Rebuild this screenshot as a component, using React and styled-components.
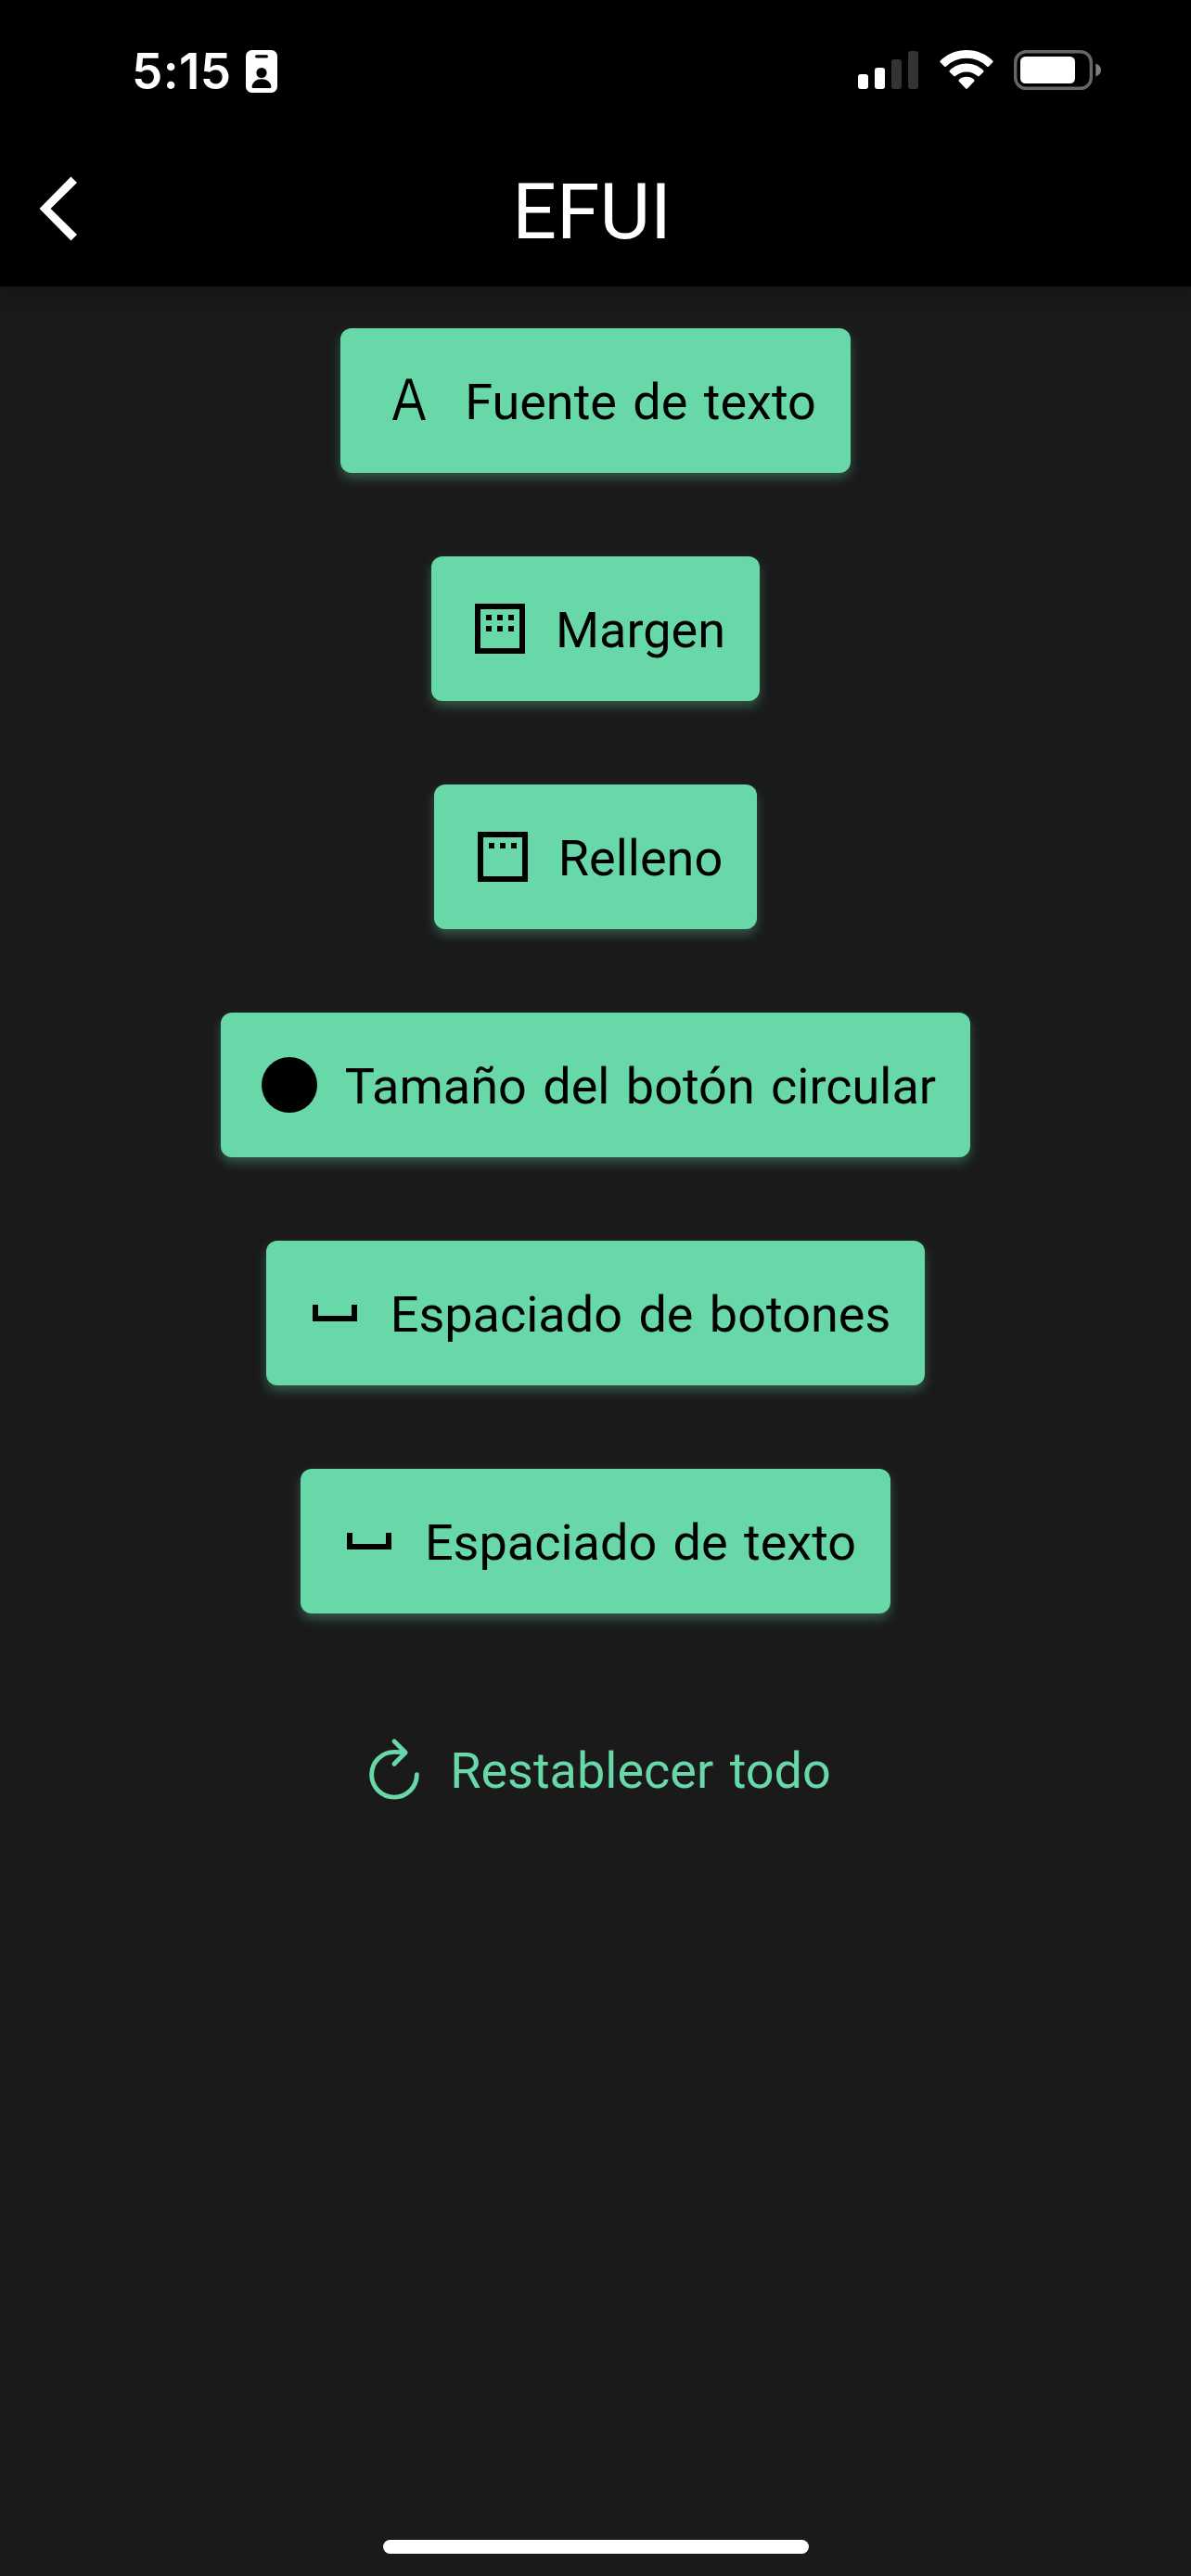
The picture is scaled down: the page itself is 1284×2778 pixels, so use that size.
import React from "react";
import styled, { createGlobalStyle } from "styled-components";

const GlobalStyle = createGlobalStyle`
  body {
    margin: 0;
    background: #1a1a1a;
  }
`;

const Screen = styled.div`
  display: flex;
  flex-direction: column;
  width: 1284px;
  height: 2778px;
  overflow: hidden;
  background: #1a1a1a;
  font-family: Roboto, "Liberation Sans", sans-serif;
`;

const Header = styled.header`
  display: flex;
  flex-direction: column;
  flex: none;
  height: 309px;
  background: #000;
  box-shadow: 0 3px 24px rgba(0, 0, 0, 0.4);
`;

const StatusBar = styled.div`
  display: flex;
  align-items: center;
  justify-content: space-between;
  height: 154px;
  box-sizing: border-box;
  padding: 0 96px 0 142px;
`;

const StatusGroup = styled.div`
  display: flex;
  align-items: center;
  padding-bottom: ${(p) => p.$lift || 0}px;
`;

const Clock = styled.span`
  width: 123px;
  color: #fff;
  font-family: Inter, "Liberation Sans", sans-serif;
  font-size: 53px;
  font-weight: 600;
  line-height: 60px;
  letter-spacing: 0.4px;
`;

const Glyph = styled.svg`
  display: block;
  flex: none;
  overflow: visible;
`;

const NavBar = styled.div`
  display: grid;
  grid-template-columns: 120px 1fr 120px;
  align-items: center;
  height: 142px;
`;

const BackButton = styled.button`
  display: flex;
  padding: 0 0 0 42px;
  border: 0;
  background: none;
`;

const Title = styled.h1`
  margin: 0;
  padding: 7px 8px 0 0;
  color: #fff;
  font-size: 84px;
  font-weight: 400;
  line-height: 100px;
  text-align: center;
`;

const Options = styled.main`
  display: flex;
  flex: 1;
  flex-direction: column;
  align-items: center;
  gap: 90px;
  padding-top: 45px;
`;

const OptionButton = styled.button`
  display: flex;
  align-items: center;
  gap: 24px;
  height: 156px;
  box-sizing: border-box;
  padding: 0 37px 0 38px;
  border: 0;
  border-radius: 12px;
  background: ${(p) => (p.$plain ? "transparent" : "#68d8a8")};
  box-shadow: ${(p) => (p.$plain ? "none" : "0 6px 12px rgba(104, 216, 168, 0.32)")};
  color: ${(p) => (p.$plain ? "#68d8a8" : "#000")};
  font-family: inherit;
`;

const Label = styled.span`
  padding-top: 3px;
  font-size: 54px;
  line-height: 60px;
  word-spacing: 4px;
  white-space: nowrap;
`;

const HomeIndicator = styled.div`
  flex: none;
  align-self: center;
  width: 459px;
  height: 15px;
  margin: 0 0 24px 1px;
  border-radius: 8px;
  background: #fff;
`;

const BadgeIcon = () => (
  <Glyph width="34" height="46" viewBox="0 0 34 46">
    <rect width="34" height="46" rx="6.5" fill="#fff" />
    <rect x="10" y="5.2" width="14" height="3.2" rx="1.6" />
    <circle cx="17" cy="24.5" r="5.6" />
    <path d="M8.5 41C7 41 6.5 40.5 6.6 39.2C7.2 34.6 11.5 31.3 17 31.3S26.800 34.600 27.400 39.200C27.500 40.500 27 41 25.500 41Z" />
  </Glyph>
);

const SignalIcon = () => (
  <Glyph width="65" height="43" viewBox="0 0 65 43">
    <rect y="26" width="11" height="16" rx="3" fill="#fff" />
    <rect x="18" y="19" width="11" height="23" rx="3" fill="#fff" />
    <rect x="36" y="10" width="11" height="32" rx="3" fill="#333" />
    <rect x="54" y="1" width="11" height="41" rx="3" fill="#333" />
  </Glyph>
);

const WifiIcon = styled(Glyph)`
  margin: 0 22px 0 23px;
`;

const Wifi = () => (
  <WifiIcon width="58" height="43" viewBox="0 0 58 43" fill="#fff">
    <path d="M29 0C40.500 0 50.500 4.600 57.200 11.600Q58 12.500 57.200 13.300L52.800 17.700Q52 18.500 51.200 17.700A32 32 0 0 0 6.800 17.700Q6 18.500 5.200 17.700L.8 13.300Q0 12.500 .8 11.600C7.500 4.600 17.500 0 29 0Z" />
    <path d="M29 14.500C36.400 14.500 42.400 17.400 47.200 22Q48 22.900 47.200 23.700L42.700 28.100Q41.900 28.900 41.100 28.100A18 18 0 0 0 16.900 28.100Q16.100 28.900 15.300 28.100L10.800 23.700Q10 22.900 10.800 22C15.600 17.400 21.600 14.500 29 14.500Z" />
    <path d="M29 28.800C32.300 28.800 35 30 37.200 32Q38 32.900 37.200 33.700L29.800 41.500Q29 42.300 28.200 41.500L20.800 33.700Q20 32.900 20.800 32C23 30 25.700 28.800 29 28.800Z" />
  </WifiIcon>
);

const BatteryIcon = () => (
  <Glyph width="95" height="43" viewBox="0 0 95 43">
    <rect x="1.700" y="1.700" width="81.600" height="39.600" rx="11.500" fill="none" stroke="#666" strokeWidth="3.400" />
    <rect x="7" y="7" width="59" height="29" rx="5.500" fill="#fff" />
    <path d="M88.300 14.500Q94 16.800 94 21.500T88.300 28.500Z" fill="#808080" />
  </Glyph>
);

const BackIcon = () => (
  <Glyph width="42" height="70" viewBox="0 0 42 70" fill="#fff">
    <path d="M34.500.500L41 7L12.600 35L41 63L34.500 69.500L.500 35Z" />
  </Glyph>
);

const Icon24 = ({ children }) => (
  <Glyph width="72" height="72" viewBox="0 0 24 24" fill="currentColor">
    {children}
  </Glyph>
);

const FontIcon = () => (
  <Glyph width="72" height="72" viewBox="0 0 72 72" fill="currentColor">
    <path d="M18 57L33 12.400H38.800L54 57H49.200L44.900 43.700H27.100L22.900 57ZM28.600 39.100H43.400L35.900 16.200Z" />
  </Glyph>
);

const MarginIcon = () => (
  <Icon24>
    <path d="M3 3V21H21V3H3M19 19H5V5H19V19M11 7H13V9H11V7M7 7H9V9H7V7M15 7H17V9H15V7M11 11H13V13H11V11M7 11H9V13H7V11M15 11H17V13H15V11Z" />
  </Icon24>
);

const PaddingIcon = () => (
  <Icon24>
    <path d="M3 3V21H21V3H3M19 19H5V5H19V19M11 7H13V9H11V7M7 7H9V9H7V7M15 7H17V9H15V7Z" />
  </Icon24>
);

const CircleIcon = () => (
  <Icon24>
    <circle cx="12" cy="12" r="10" />
  </Icon24>
);

const SpaceIcon = () => (
  <Icon24>
    <path d="M18 9V13H6V9H4V15H20V9Z" />
  </Icon24>
);

const RefreshIcon = () => (
  <Glyph
    width="72"
    height="72"
    viewBox="19.700 19.700 472.600 472.600"
    fill="none"
    stroke="currentColor"
    strokeWidth="32"
    strokeLinecap="round"
  >
    <path d="M320 146s24.360-12-64-12a160 160 0 1 0 160 160" strokeMiterlimit="10" />
    <path d="M256 58l80 80-80 80" strokeLinejoin="round" />
  </Glyph>
);

const options = [
  { label: "Fuente de texto", icon: FontIcon },
  { label: "Margen", icon: MarginIcon },
  { label: "Relleno", icon: PaddingIcon },
  { label: "Tamaño del botón circular", icon: CircleIcon },
  { label: "Espaciado de botones", icon: SpaceIcon },
  { label: "Espaciado de texto", icon: SpaceIcon },
  { label: "Restablecer todo", icon: RefreshIcon, plain: true },
];

export default function App() {
  return (
    <Screen>
      <GlobalStyle />
      <Header>
        <StatusBar>
          <StatusGroup>
            <Clock>5:15</Clock>
            <BadgeIcon />
          </StatusGroup>
          <StatusGroup $lift={3}>
            <SignalIcon />
            <Wifi />
            <BatteryIcon />
          </StatusGroup>
        </StatusBar>
        <NavBar>
          <BackButton aria-label="Atrás">
            <BackIcon />
          </BackButton>
          <Title>EFUI</Title>
        </NavBar>
      </Header>
      <Options>
        {options.map(({ label, icon: Icon, plain }) => (
          <OptionButton key={label} $plain={plain}>
            <Icon />
            <Label>{label}</Label>
          </OptionButton>
        ))}
      </Options>
      <HomeIndicator />
    </Screen>
  );
}
